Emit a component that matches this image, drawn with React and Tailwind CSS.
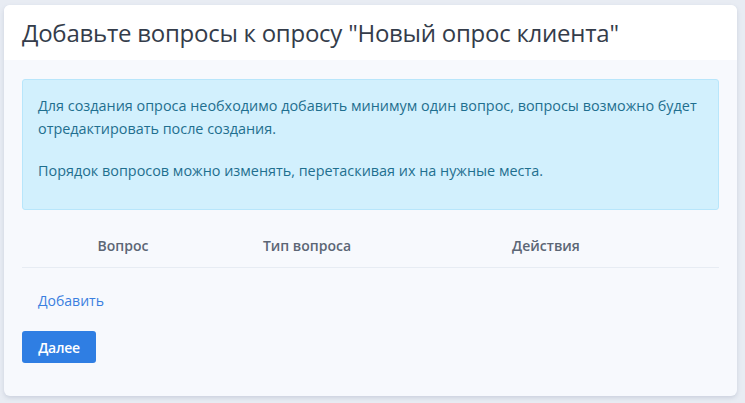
const App = () => {
    return (
        <div className="min-h-[403px] bg-[#e8ecf3] px-1 pt-[5px] pb-2 font-['Open_Sans',sans-serif]">
            <div className="w-[733px] rounded-md bg-[#f7f9fd] shadow-[0_2px_4px_rgba(120,130,160,0.25)] overflow-hidden">
                {/* шапка */}
                <div className="h-[55px] bg-white px-[18px] flex items-center">
                    <h1 className="text-[24px] text-[#343c4a] tracking-[-0.25px] pt-[1px]">
                        Добавьте вопросы к опросу "Новый опрос клиента"
                    </h1>
                </div>

                <div className="px-[18px] pt-[19px] pb-[33px]">
                    <div className="h-[131px] rounded-[3px] border border-[#b8e6fb] bg-[#d2f0fd] px-[15px] pt-[14px] text-[14.4px] leading-[23px] text-[#1f6f8f]">
                        <p>Для создания опроса необходимо добавить минимум один вопрос, вопросы возможно будет отредактировать после создания.</p>
                        <p className="mt-[19px]">Порядок вопросов можно изменять, перетаскивая их на нужные места.</p>
                    </div>

                    <div className="mt-[25px] grid grid-cols-[202px_166px_312px_1fr] h-[33px] items-start border-b border-[#e7ecf3] text-[14px] font-semibold text-[#5c6675]">
                        <div className="text-center">Вопрос</div>
                        <div className="text-center">Тип вопроса</div>
                        <div className="text-center">Действия</div>
                        <div></div>
                    </div>

                    <div className="px-[16px] pt-[20px] h-[63px]">
                        <a href="#" className="text-[14px] text-[#3a7fe0]">Добавить</a>
                    </div>

                    <button className="w-[74px] h-[32px] rounded-[3px] bg-[#2f7ee3] text-white text-[14px] font-semibold tracking-[-0.3px]">
                        Далее
                    </button>
                </div>
            </div>
        </div>
    );
};

export default App;
